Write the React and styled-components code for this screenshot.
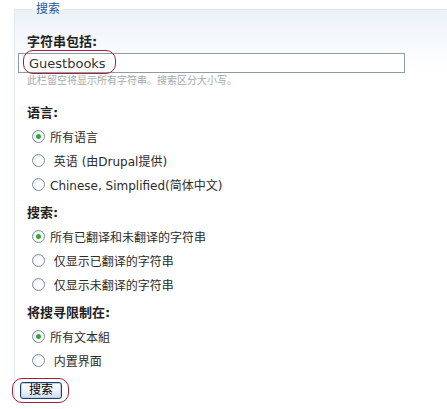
import React from "react";
import styled, { createGlobalStyle } from "styled-components";

const GlobalStyle = createGlobalStyle`
  html, body {
    margin: 0;
    padding: 0;
    background: #ffffff;
  }
  body {
    font-family: "DejaVu Sans", "Noto Sans CJK SC", sans-serif;
    font-size: 12px;
    color: #2b2b2b;
  }
`;

const Page = styled.div`
  width: 447px;
  height: 409px;
  overflow: hidden;
`;

const Fieldset = styled.fieldset`
  margin: 3px 0 0 14px;
  padding: 19px 0 0 3px;
  border: 0;
  border-top: 1px solid #dfe7ee;
  border-left: 1px solid #e1eaf1;
  background: linear-gradient(to bottom, #eaf2f8 0px, #f6f9fc 30px, #ffffff 60px);
  min-width: 0;
`;

const Legend = styled.legend`
  margin-left: 15px;
  padding: 0 3px;
  font-size: 12px;
  line-height: 12px;
  height: 12px;
  color: #1d55a5;
`;

const Label = styled.div`
  padding-left: 9px;
  font-size: 13px;
  line-height: 16px;
  font-weight: bold;
  color: #222222;
  margin-top: ${(p) => p.$gap || 0}px;
`;

const InputWrap = styled.div`
  position: relative;
  margin-top: 3px;
  width: 387px;
`;

const TextInput = styled.div`
  box-sizing: border-box;
  height: 20px;
  border: 1px solid #8c9ba6;
  background: #ffffff;
  padding-left: 10px;
  font-size: 13px;
  line-height: 19px;
  color: #333333;
`;

const Mark = styled.div`
  position: absolute;
  left: ${(p) => p.$x}px;
  top: ${(p) => p.$y}px;
  width: ${(p) => p.$w}px;
  height: ${(p) => p.$h}px;
  border: 1.5px solid #a51f3d;
  border-radius: 10px;
  box-sizing: border-box;
  pointer-events: none;
`;

const Description = styled.div`
  padding-left: 9px;
  margin-top: 2px;
  font-size: 10px;
  line-height: 12px;
  color: #a8a8a8;
`;

const RadioList = styled.div`
  padding-left: 14px;
  margin-top: 3px;
  display: flex;
  flex-direction: column;
`;

const RadioRow = styled.div`
  display: flex;
  align-items: center;
  height: 24px;
  gap: 5px;
  white-space: pre;
  font-size: 12px;
  color: #2b2b2b;
`;

const RadioDot = styled.span`
  box-sizing: border-box;
  width: 13px;
  height: 13px;
  border-radius: 50%;
  border: 1px solid #7c8ea4;
  background: radial-gradient(circle at 60% 65%, #ffffff 30%, #e2e5ea 100%);
  display: flex;
  align-items: center;
  justify-content: center;
  &::after {
    content: "";
    width: 5px;
    height: 5px;
    border-radius: 50%;
    background: ${(p) => (p.$checked ? "#35a535" : "transparent")};
  }
`;

const ButtonWrap = styled.div`
  position: relative;
  margin: 10px 0 0 2px;
  width: 42px;
`;

const Button = styled.button`
  box-sizing: border-box;
  width: 42px;
  height: 17px;
  padding: 0;
  border: 1px solid #1d3f6e;
  border-radius: 3px;
  background: linear-gradient(to bottom, #ffffff 0%, #eef3f9 50%, #cfdceb 100%);
  box-shadow: inset 0 0 0 1px #bcd0ea;
  font-family: "DejaVu Sans", "Noto Sans CJK SC", sans-serif;
  font-size: 12px;
  line-height: 15px;
  color: #000000;
`;

const groups = [
  {
    label: "语言:",
    gap: 18,
    options: ["所有语言", " 英语 (由Drupal提供)", "Chinese, Simplified(简体中文)"],
  },
  {
    label: "搜索:",
    gap: 9,
    options: ["所有已翻译和未翻译的字符串", " 仅显示已翻译的字符串", " 仅显示未翻译的字符串"],
  },
  {
    label: "将搜寻限制在:",
    gap: 9,
    options: ["所有文本組", " 内置界面"],
  },
];

export default function App() {
  return (
    <Page>
      <GlobalStyle />
      <Fieldset>
        <Legend>搜索</Legend>
        <Label>字符串包括:</Label>
        <InputWrap>
          <TextInput>Guestbooks</TextInput>
          <Mark $x={5} $y={-3} $w={93} $h={24} />
        </InputWrap>
        <Description>此栏留空将显示所有字符串。搜索区分大小写。</Description>
        {groups.map((g) => (
          <React.Fragment key={g.label}>
            <Label $gap={g.gap}>{g.label}</Label>
            <RadioList>
              {g.options.map((o, i) => (
                <RadioRow key={o}>
                  <RadioDot $checked={i === 0} />
                  {o}
                </RadioRow>
              ))}
            </RadioList>
          </React.Fragment>
        ))}
        <ButtonWrap>
          <Button>搜索</Button>
          <Mark $x={-8} $y={-4} $w={57} $h={25} />
        </ButtonWrap>
      </Fieldset>
    </Page>
  );
}
